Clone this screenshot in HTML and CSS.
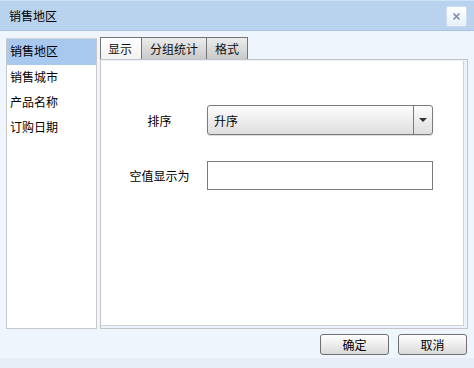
FILE: index.html
```html
<!DOCTYPE html>
<html lang="zh-CN">
<head>
    <meta charset="UTF-8">
    <title>销售地区</title>
    <link rel="stylesheet" href="styles.css">
</head>
<body>
    <div class="dialog">
        <div class="titlebar">
            <span class="title">销售地区</span>
            <button class="close" title="关闭">
                <svg width="11" height="11" viewBox="0 0 11 11">
                    <path d="M2.5 2.5 L8.5 8.5 M8.5 2.5 L2.5 8.5" stroke="#7d8ca5" stroke-width="1.7" fill="none"/>
                </svg>
            </button>
        </div>
        <div class="main">
            <ul class="fields">
                <li class="selected">销售地区</li>
                <li>销售城市</li>
                <li>产品名称</li>
                <li>订购日期</li>
            </ul>
            <div class="panel">
                <div class="tabs">
                    <div class="tab active">显示</div>
                    <div class="tab">分组统计</div>
                    <div class="tab">格式</div>
                </div>
                <div class="content">
                    <div class="inner">
                        <div class="form">
                            <label class="label">排序</label>
                            <div class="select">
                                <span class="value">升序</span>
                                <span class="arrow"></span>
                            </div>
                            <label class="label">空值显示为</label>
                            <input class="textbox" type="text">
                        </div>
                    </div>
                </div>
            </div>
        </div>
        <div class="footer">
            <button class="btn">确定</button>
            <button class="btn">取消</button>
        </div>
    </div>
</body>
</html>
```

FILE: styles.css
```css
html {
    background: #e7eef8;
}
body {
    margin: 0;
    font-family: "Noto Sans CJK SC", "Liberation Sans", sans-serif;
    font-size: 12px;
    color: #000;
}
.dialog {
    width: 474px;
    height: 358px;
    background: #eef5fd;
}
/* Titelleiste */
.titlebar {
    height: 31px;
    background: #b9d3ee;
    border-top: 1px solid #cfe1f4;
    box-sizing: border-box;
    border-bottom: 1px solid #a9c2de;
    display: flex;
    align-items: center;
    justify-content: space-between;
    padding: 0 7px 0 9px;
}
.title {
    font-size: 12px;
    line-height: 14px;
}
.close {
    width: 21px;
    height: 21px;
    margin-top: 1px;
    padding: 0;
    border: 1px solid #cddcee;
    border-radius: 2px;
    background: linear-gradient(#ffffff, #e6eff9);
    display: flex;
    align-items: center;
    justify-content: center;
}
/* Hauptbereich */
.main {
    display: flex;
    gap: 3px;
    padding: 7px 6px 0 6px;
    height: 291px;
}
.fields {
    list-style: none;
    margin: 0;
    padding: 0;
    width: 91px;
    box-sizing: border-box;
    border: 1px solid #c9c9c9;
    border-top-color: #d6d6d6;
    background: #fff;
}
.fields li {
    height: 25px;
    line-height: 24px;
    padding-left: 3px;
}
.fields li.selected {
    background: #a9c8ee;
    height: 26px;
}
.panel {
    flex: 1;
    display: flex;
    flex-direction: column;
}
.tabs {
    display: flex;
    height: 22px;
    margin-top: -1px;
}
.tab {
    height: 22px;
    box-sizing: border-box;
    border: 1px solid #747474;
    border-bottom: none;
    margin-right: -1px;
    padding: 0 8px;
    line-height: 21px;
    background: linear-gradient(#ececec, #c9c9c9);
    color: #111;
}
.tab.active {
    background: linear-gradient(#ffffff, #f2f2f2);
    padding: 0 8px 0 7px;
    width: 42px;
    margin-right: -1px;
}
.content {
    flex: 1;
    border: 1px solid #c4c4c4;
    background: #eaf2fc;
    padding: 1px 3px 2px 0;
}
.inner {
    height: 100%;
    box-sizing: border-box;
    background: #fff;
    border-right: 1px solid #d2d2d2;
    border-bottom: 1px solid #d2d2d2;
    padding: 44px 0 0 9px;
}
/* Formular */
.form {
    display: grid;
    grid-template-columns: 97px 226px;
    grid-template-rows: 30px 29px;
    row-gap: 26px;
    align-items: center;
}
.label {
    text-align: center;
    padding-left: 2px;
}
.select {
    height: 30px;
    box-sizing: border-box;
    border: 1px solid #7a7a7a;
    border-radius: 3px;
    background: linear-gradient(#fdfdfd, #dedede);
    display: flex;
    align-items: center;
    box-shadow: 0 1px 1px rgba(0,0,0,0.15);
}
.value {
    flex: 1;
    padding-left: 6px;
}
.arrow {
    width: 18px;
    height: 100%;
    border-left: 1px solid #7a7a7a;
    display: flex;
    align-items: center;
    justify-content: center;
}
.arrow::after {
    content: "";
    border-left: 4px solid transparent;
    border-right: 4px solid transparent;
    border-top: 4px solid #333;
}
.textbox {
    height: 29px;
    box-sizing: border-box;
    border: 1px solid #7a7a7a;
    margin: 0;
    padding: 0 4px;
    background: #fff;
}
/* Schaltflächen */
.footer {
    display: flex;
    justify-content: flex-end;
    gap: 9px;
    padding: 5px 7px 0 0;
}
.btn {
    width: 69px;
    height: 21px;
    padding: 0;
    font-family: inherit;
    font-size: 12px;
    line-height: 18px;
    border: 1px solid #6f6f6f;
    border-radius: 3px;
    background: linear-gradient(#ffffff, #dadada);
    color: #000;
}
```
